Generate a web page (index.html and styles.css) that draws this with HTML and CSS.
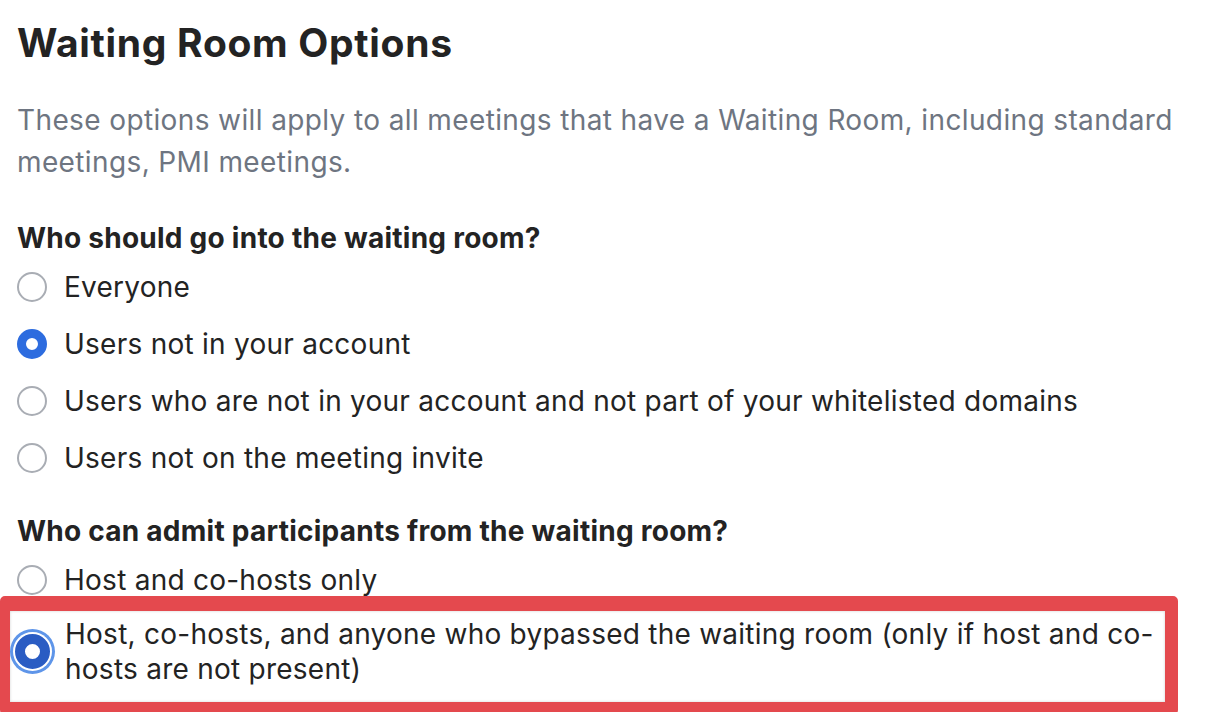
FILE: index.html
```html
<!DOCTYPE html>
<html>
<head>
<meta charset="utf-8">
<link rel="stylesheet" href="styles.css">
</head>
<body>
<div class="page">
  <h1 class="title">Waiting Room Options</h1>
  <p class="desc">These options will apply to all meetings that have a Waiting Room, including standard meetings, PMI meetings.</p>

  <div class="group">
    <div class="group-label">Who should go into the waiting room?</div>
    <div class="option"><span class="radio"></span><span class="opt-text">Everyone</span></div>
    <div class="option"><span class="radio checked"></span><span class="opt-text">Users not in your account</span></div>
    <div class="option"><span class="radio"></span><span class="opt-text">Users who are not in your account and not part of your whitelisted domains</span></div>
    <div class="option"><span class="radio"></span><span class="opt-text">Users not on the meeting invite</span></div>
  </div>

  <div class="group group2">
    <div class="group-label">Who can admit participants from the waiting room?</div>
    <div class="option"><span class="radio"></span><span class="opt-text">Host and co-hosts only</span></div>
    <div class="highlight">
      <div class="option-multi"><span class="radio checked focused"></span><span class="opt-text">Host, co-hosts, and anyone who bypassed the waiting room (only if host and co-hosts are not present)</span></div>
    </div>
  </div>
</div>
</body>
</html>
```
FILE: styles.css
```css
html, body {
  margin: 0;
  padding: 0;
  background: #ffffff;
}
body {
  font-family: Inter, "Noto Sans", "Liberation Sans", sans-serif;
  color: #232323;
  overflow: hidden;
}
.page {
  padding: 17px 0 0 17px;
  width: 1175px;
}
.title {
  margin: 0;
  font-size: 39px;
  font-weight: 700;
  line-height: 52px;
  color: #232323;
  letter-spacing: 0.7px;
}
.desc {
  margin: 30px 0 0;
  font-size: 28px;
  line-height: 42px;
  color: #6e7581;
  letter-spacing: 0.38px;
}
.group {
  margin-top: 37px;
}
.group2 {
  margin-top: 27px;
}
.group-label {
  font-size: 28px;
  font-weight: 700;
  line-height: 36px;
  letter-spacing: 0.25px;
  color: #232323;
}
.option {
  display: flex;
  align-items: center;
  gap: 17px;
  height: 57px;
  font-size: 28px;
  letter-spacing: 0.25px;
  color: #232323;
}
.group-label + .option {
  margin-top: 2px;
}
.radio {
  flex: none;
  width: 30px;
  height: 30px;
  box-sizing: border-box;
  border-radius: 50%;
  border: 2px solid #a9adb4;
  background: #fff;
}
.radio.checked {
  border: 9px solid #2d6cdf;
}
.radio.focused {
  width: 35px;
  height: 35px;
  border: 10px solid #2a5cc3;
  box-shadow: 0 0 0 2px #fff, 0 0 0 5px #5e95e9;
}
.highlight {
  box-sizing: border-box;
  margin: -12px 0 0 -17px;
  width: 1178px;
  height: 119px;
  border: 13px solid #e4494e;
  border-top-width: 15px;
  border-left-width: 10px;
  border-radius: 5px;
  padding: 6px 0 0 5px;
  box-shadow: inset 0 0 3px rgba(0, 0, 0, 0.18);
}
.option-multi {
  display: flex;
  align-items: flex-start;
  gap: 15px;
  font-size: 28px;
  letter-spacing: 0.25px;
  color: #232323;
}
.option-multi .radio {
  margin-top: 17px;
}
.option-multi .opt-text {
  line-height: 35px;
}
```
